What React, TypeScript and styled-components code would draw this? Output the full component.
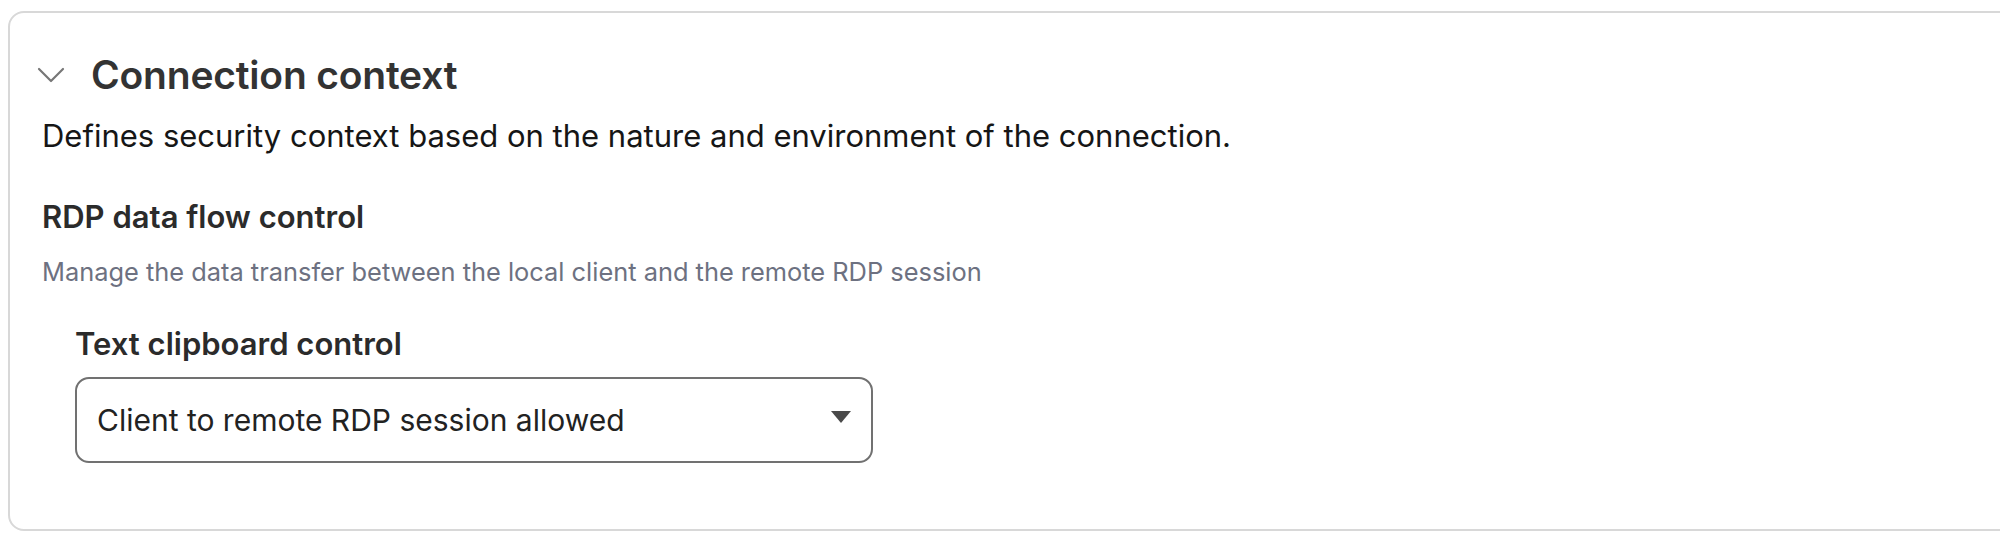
import React from 'react';
import styled, { createGlobalStyle } from 'styled-components';

const GlobalStyle = createGlobalStyle`
  html, body {
    margin: 0;
    padding: 0;
    background: #ffffff;
    overflow: hidden;
  }
  body {
    font-family: Inter, "Liberation Sans", Arial, sans-serif;
    -webkit-font-smoothing: antialiased;
  }
`;

const Page = styled.div`
  width: 2000px;
  height: 546px;
  padding: 11px 0 0 8px;
  box-sizing: border-box;
  overflow: hidden;
`;

// card runs off the right edge of the frame in the reference
const Card = styled.section`
  width: 2100px;
  box-sizing: border-box;
  background: #fff;
  border: 2px solid #d8d8d8;
  border-radius: 16px;
  padding: 42px 0 66px 26px;
`;

const Header = styled.div`
  display: flex;
  align-items: center;
  gap: 25px;
  height: 40px;
`;

const Toggle = styled.button`
  display: flex;
  align-items: center;
  justify-content: center;
  padding: 0;
  margin: 0;
  width: 30px;
  height: 30px;
  border: none;
  background: none;
  color: #777;
  cursor: pointer;
`;

const Title = styled.h2`
  margin: 0;
  font-size: 39px;
  line-height: 40px;
  font-weight: 600;
  color: #333333;
  letter-spacing: -0.2px;
`;

const Body = styled.div`
  padding-left: 6px;
`;

const Description = styled.p`
  margin: 23px 0 0;
  font-size: 31px;
  line-height: 36px;
  color: #161616;
`;

const Group = styled.div`
  margin-top: 45px;
`;

const GroupTitle = styled.h3`
  margin: 0;
  font-size: 31px;
  line-height: 36px;
  font-weight: 600;
  color: #2b2b2b;
`;

const GroupHint = styled.p`
  margin: 22px 0 0;
  font-size: 25.4px;
  line-height: 30px;
  color: #6d7181;
`;

const Field = styled.div`
  margin: 39px 0 0 33px;
  display: flex;
  flex-direction: column;
  gap: 15px;
`;

const FieldLabel = styled.label`
  font-size: 31px;
  line-height: 36px;
  font-weight: 600;
  color: #2b2b2b;
`;

const SelectBox = styled.div`
  width: 798px;
  height: 86px;
  box-sizing: border-box;
  border: 2px solid #717171;
  border-radius: 14px;
  display: flex;
  align-items: center;
  padding: 0 20px;
  font-size: 30px;
  color: #222;
`;

const Caret = styled.span`
  margin-left: auto;
  width: 0;
  height: 0;
  border-left: 10px solid transparent;
  border-right: 10px solid transparent;
  border-top: 12px solid #4a4a4a;
  transform: translateY(-3px);
`;

export default function App() {
  return (
    <>
      <GlobalStyle />
      <Page>
        <Card>
          <Header>
            <Toggle aria-label="Collapse">
              <svg width="28" height="18" viewBox="0 0 28 18" fill="none" stroke="currentColor" strokeWidth="2.2" strokeLinecap="round" strokeLinejoin="round">
                <polyline points="2,3 14,15 26,3" />
              </svg>
            </Toggle>
            <Title>Connection context</Title>
          </Header>
          <Body>
            <Description>Defines security context based on the nature and environment of the connection.</Description>
            <Group>
              <GroupTitle>RDP data flow control</GroupTitle>
              <GroupHint>Manage the data transfer between the local client and the remote RDP session</GroupHint>
              <Field>
                <FieldLabel>Text clipboard control</FieldLabel>
                <SelectBox>
                  Client to remote RDP session allowed
                  <Caret />
                </SelectBox>
              </Field>
            </Group>
          </Body>
        </Card>
      </Page>
    </>
  );
}
